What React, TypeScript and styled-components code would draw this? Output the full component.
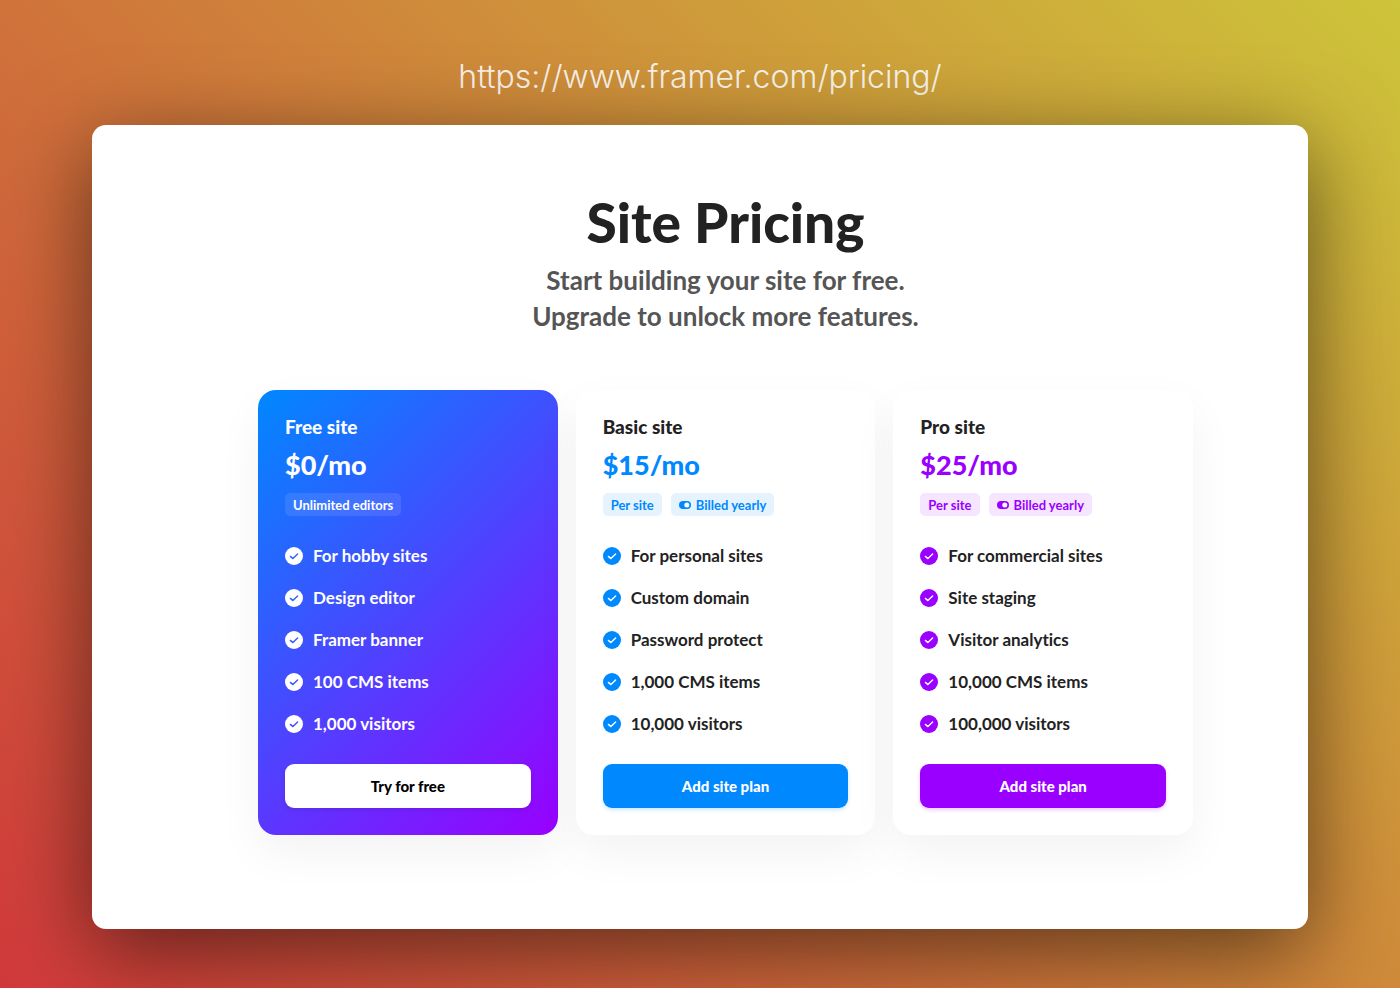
import React from "react";
import styled, { createGlobalStyle } from "styled-components";

const GlobalStyle = createGlobalStyle`
  *, *::before, *::after { box-sizing: border-box; }
  body {
    margin: 0;
    font-family: Lato, "Open Sans", sans-serif;
    font-variant-ligatures: none;
    color: #222;
  }
  h1, h2, p, ul { margin: 0; padding: 0; }
`;

const Page = styled.div`
  display: flex;
  flex-direction: column;
  gap: 31px;
  min-height: 100vh;
  padding: 60px 92px 59px;
  background: linear-gradient(45deg, #d1393b, #cdc43a);
`;

const Address = styled.a`
  align-self: center;
  font-family: Inter, sans-serif;
  font-size: 32px;
  font-weight: 300;
  line-height: 34px;
  color: rgba(255, 255, 255, 0.9);
  text-decoration: none;
`;

const Panel = styled.main`
  flex: 1;
  padding: 65px 115px 94px 166px;
  border-radius: 14px;
  background: #fff;
  box-shadow: 0 22px 87px rgba(0, 0, 0, 0.55);
`;

const Header = styled.header`
  text-align: center;
`;

const Title = styled.h1`
  font-size: 55px;
  font-weight: 900;
  line-height: 64px;
`;

const Subtitle = styled.p`
  margin-top: 8px;
  font-size: 26px;
  font-weight: 700;
  line-height: 36px;
  color: #555;
`;

const Plans = styled.section`
  display: grid;
  grid-template-columns: repeat(auto-fit, minmax(260px, 1fr));
  gap: 18px;
  margin-top: 56px;
`;

const Card = styled.article<{ $featured?: boolean }>`
  display: flex;
  flex-direction: column;
  padding: 27px;
  border-radius: 18px;
  color: ${(p) => (p.$featured ? "#fff" : "#222")};
  background: ${(p) => (p.$featured ? "linear-gradient(135deg, #08f, #90f)" : "#fff")};
  box-shadow: 0 18px 46px rgba(0, 0, 0, 0.05);
`;

const PlanName = styled.h2`
  font-size: 19px;
  font-weight: 900;
  line-height: 20px;
`;

const Price = styled.p<{ $color: string }>`
  margin-top: 12px;
  font-size: 27px;
  font-weight: 900;
  line-height: 32px;
  color: ${(p) => p.$color};
`;

const Badges = styled.div`
  display: flex;
  gap: 9px;
  margin-top: 12px;
`;

const Badge = styled.span<{ $color: string; $fill: string }>`
  display: flex;
  align-items: center;
  gap: 5px;
  height: 23px;
  padding: 0 8px;
  border-radius: 5px;
  font-size: 13px;
  font-weight: 700;
  white-space: nowrap;
  color: ${(p) => p.$color};
  background: ${(p) => p.$fill};
`;

const Features = styled.ul`
  display: flex;
  flex-direction: column;
  gap: 18px;
  margin-top: 28px;
  list-style: none;
`;

const Feature = styled.li`
  display: flex;
  align-items: center;
  gap: 10px;
  font-size: 17px;
  font-weight: 700;
  line-height: 24px;
`;

const PlanButton = styled.button<{ $color: string; $fill: string; $shadow: string }>`
  height: 44px;
  margin-top: 28px;
  border: 0;
  border-radius: 9px;
  font-family: inherit;
  font-size: 15px;
  font-weight: 900;
  color: ${(p) => p.$color};
  background: ${(p) => p.$fill};
  box-shadow: 0 2px 4px ${(p) => p.$shadow};
  cursor: pointer;
`;

const CheckIcon = ({ fill, stroke }: { fill: string; stroke: string }) => (
  <svg width="18" height="18" viewBox="0 0 18 18" aria-hidden="true">
    <circle cx="9" cy="9" r="9" fill={fill} />
    <path
      d="M5.4 9.4 7.9 11.6 12.6 7"
      fill="none"
      stroke={stroke}
      strokeWidth="1.4"
      strokeLinecap="round"
      strokeLinejoin="round"
    />
  </svg>
);

const ToggleIcon = ({ color }: { color: string }) => (
  <svg width="12" height="8" viewBox="0 0 12 8" aria-hidden="true">
    <rect width="12" height="8" rx="4" fill={color} />
    <circle cx="7.8" cy="4" r="2.5" fill="#fff" />
  </svg>
);

type Plan = {
  name: string;
  price: string;
  featured?: boolean;
  accent: string;
  badgeFill: string;
  badges: { label: string; toggle?: boolean }[];
  features: string[];
  checks: string[];
  action: string;
  actionColor: string;
  shadow: string;
};

const paidBadges = [{ label: "Per site" }, { label: "Billed yearly", toggle: true }];

const plans: Plan[] = [
  {
    name: "Free site",
    price: "$0/mo",
    featured: true,
    accent: "#fff",
    badgeFill: "rgba(255, 255, 255, 0.1)",
    badges: [{ label: "Unlimited editors" }],
    features: ["For hobby sites", "Design editor", "Framer banner", "100 CMS items", "1,000 visitors"],
    checks: ["#2668ff", "#2f61ff", "#3859ff", "#4051ff", "#494aff"],
    action: "Try for free",
    actionColor: "#000",
    shadow: "rgba(0, 0, 0, 0.1)",
  },
  {
    name: "Basic site",
    price: "$15/mo",
    accent: "#08f",
    badgeFill: "#e5f3ff",
    badges: paidBadges,
    features: ["For personal sites", "Custom domain", "Password protect", "1,000 CMS items", "10,000 visitors"],
    checks: [],
    action: "Add site plan",
    actionColor: "#fff",
    shadow: "rgba(0, 136, 255, 0.2)",
  },
  {
    name: "Pro site",
    price: "$25/mo",
    accent: "#90f",
    badgeFill: "#f5e5ff",
    badges: paidBadges,
    features: ["For commercial sites", "Site staging", "Visitor analytics", "10,000 CMS items", "100,000 visitors"],
    checks: [],
    action: "Add site plan",
    actionColor: "#fff",
    shadow: "rgba(153, 0, 255, 0.2)",
  },
];

export default function App() {
  return (
    <>
      <GlobalStyle />
      <Page>
        <Address href="https://www.framer.com/pricing/">https://www.framer.com/pricing/</Address>
        <Panel>
          <Header>
            <Title>Site Pricing</Title>
            <Subtitle>
              Start building your site for free.
              <br />
              Upgrade to unlock more features.
            </Subtitle>
          </Header>
          <Plans>
            {plans.map((plan) => (
              <Card key={plan.name} $featured={plan.featured}>
                <PlanName>{plan.name}</PlanName>
                <Price $color={plan.accent}>{plan.price}</Price>
                <Badges>
                  {plan.badges.map((badge) => (
                    <Badge key={badge.label} $color={plan.accent} $fill={plan.badgeFill}>
                      {badge.toggle && <ToggleIcon color={plan.accent} />}
                      {badge.label}
                    </Badge>
                  ))}
                </Badges>
                <Features>
                  {plan.features.map((feature, i) => (
                    <Feature key={feature}>
                      <CheckIcon fill={plan.accent} stroke={plan.checks[i] ?? "#fff"} />
                      {feature}
                    </Feature>
                  ))}
                </Features>
                <PlanButton
                  type="button"
                  $color={plan.actionColor}
                  $fill={plan.accent}
                  $shadow={plan.shadow}
                >
                  {plan.action}
                </PlanButton>
              </Card>
            ))}
          </Plans>
        </Panel>
      </Page>
    </>
  );
}
